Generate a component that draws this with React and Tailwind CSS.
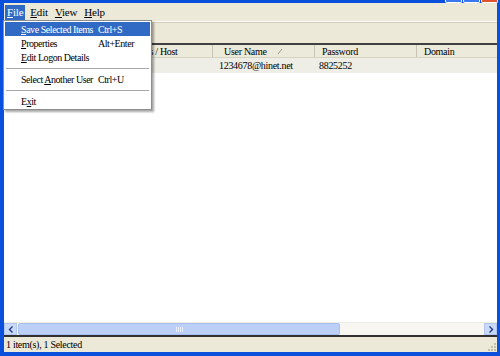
import React from "react";

const menuItems = [
  { label: "Save Selected Items", at: 0, shortcut: "Ctrl+S", active: true },
  { label: "Properties", at: 0, shortcut: "Alt+Enter" },
  { label: "Edit Logon Details", at: 0, shortcut: "" },
  { sep: true },
  { label: "Select Another User", at: 7, shortcut: "Ctrl+U" },
  { sep: true },
  { label: "Exit", at: 1, shortcut: "" },
];

function Underlined({ text, at }) {
  return (
    <span>
      {text.slice(0, at)}
      <span className="underline">{text[at]}</span>
      {text.slice(at + 1)}
    </span>
  );
}

export default function App() {
  return (
    <div
      className="relative w-[500px] h-[356px] bg-[#0a50dc] pt-[3px] pl-[4px] pr-[3px] pb-[4px] text-[10px] tracking-[-0.3px] text-black"
      style={{ fontFamily: '"Liberation Serif", "DejaVu Serif", serif' }}
    >
      {/* title bar buttons, only bottoms visible */}
      <div className="absolute top-0 right-[2px] flex gap-[1px]">
        <div className="w-[17px] h-[3px] bg-[#3a78f0] border-x border-b border-white rounded-b-[2px]" />
        <div className="w-[17px] h-[3px] bg-[#3a78f0] border-x border-b border-white rounded-b-[2px]" />
        <div className="w-[17px] h-[3px] bg-[#e0532c] border-x border-b border-white rounded-b-[2px]" />
      </div>

      <div className="flex flex-col h-full bg-[#ece9d8]">
        {/* menu bar */}
        <div className="h-[19px] flex items-center pl-[1px] text-[11px] tracking-[-0.2px] border-b border-[#fbfaf5]">
          <div className="px-[2px] h-[15px] flex items-center bg-[#316ac5] text-white">
            <Underlined text="File" at={0} />
          </div>
          <div className="px-[4px] ml-[1px]"><Underlined text="Edit" at={0} /></div>
          <div className="px-[3px]"><Underlined text="View" at={0} /></div>
          <div className="px-[4px]"><Underlined text="Help" at={0} /></div>
        </div>

        {/* toolbar area */}
        <div className="h-[21px] border-t border-[#d0cdbd]" />

        {/* list view */}
        <div className="flex-1 flex flex-col bg-white border-t-2 border-[#404040] min-h-0">
          <div className="h-[13px] flex bg-[#ebeadb] border-b border-[#d6d2c2] leading-[13px]">
            <div className="w-[209px] pl-[88px] border-r border-[#c7c5b2] whitespace-nowrap overflow-hidden">
              Internet Address / Host
            </div>
            <div className="w-[102px] pl-[11px] border-r border-[#c7c5b2] flex items-center gap-[10px]">
              <span>User Name</span>
              <svg width="7" height="7" viewBox="0 0 7 7">
                <path d="M1 6 L5 1" stroke="#9a9884" strokeWidth="1" fill="none" />
              </svg>
            </div>
            <div className="w-[102px] pl-[7px] border-r border-[#c7c5b2]">Password</div>
            <div className="flex-1 pl-[7px]">Domain</div>
          </div>
          <div className="h-[15px] flex items-center bg-[#eeede6] leading-[15px]">
            <div className="w-[209px]" />
            <div className="w-[102px] pl-[6px] whitespace-nowrap">1234678@hinet.net</div>
            <div className="w-[102px] pl-[4px]">8825252</div>
          </div>
          <div className="flex-1" />
          {/* horizontal scrollbar */}
          <div className="h-[13px] flex items-stretch bg-[#f7f6f1] border-t border-[#eeede5]">
            <div className="w-[13px] flex items-center justify-center bg-[#c9d8f7] border border-[#b3c7ee]">
              <svg width="6" height="7" viewBox="0 0 6 7">
                <path d="M4.5 0.5 L1.5 3.5 L4.5 6.5" stroke="#1c3d8c" strokeWidth="1.4" fill="none" />
              </svg>
            </div>
            <div className="w-[322px] ml-[1px] bg-[#bccff7] border border-[#a9bfee] rounded-[2px] flex items-center justify-center">
              <div className="flex gap-[1px]">
                <div className="w-[1px] h-[5px] bg-[#e8eefc]" />
                <div className="w-[1px] h-[5px] bg-[#e8eefc]" />
                <div className="w-[1px] h-[5px] bg-[#e8eefc]" />
                <div className="w-[1px] h-[5px] bg-[#e8eefc]" />
              </div>
            </div>
            <div className="flex-1" />
            <div className="w-[13px] flex items-center justify-center bg-[#c9d8f7] border border-[#b3c7ee]">
              <svg width="6" height="7" viewBox="0 0 6 7">
                <path d="M1.5 0.5 L4.5 3.5 L1.5 6.5" stroke="#1c3d8c" strokeWidth="1.4" fill="none" />
              </svg>
            </div>
          </div>
        </div>

        {/* status bar */}
        <div className="relative h-[17px] flex items-center pl-[2px] border-t-2 border-[#303030] bg-[#ece9d8]">
          1 item(s), 1 Selected
          <div className="absolute right-[1px] bottom-[1px] grid grid-cols-3 gap-[1px]">
            <div />
            <div />
            <div className="w-[2px] h-[2px] bg-[#c3bfa8]" />
            <div />
            <div className="w-[2px] h-[2px] bg-[#c3bfa8]" />
            <div className="w-[2px] h-[2px] bg-[#c3bfa8]" />
            <div className="w-[2px] h-[2px] bg-[#c3bfa8]" />
            <div className="w-[2px] h-[2px] bg-[#c3bfa8]" />
            <div className="w-[2px] h-[2px] bg-[#c3bfa8]" />
          </div>
        </div>
      </div>

      {/* File menu dropdown */}
      <div className="absolute left-[3px] top-[20px] w-[149px] bg-white border border-[#8d8d8d] shadow-[2px_2px_2px_rgba(0,0,0,0.35)] p-[1px] tracking-[-0.45px]">
        {menuItems.map((it, i) =>
          it.sep ? (
            <div key={i} className="h-[8px] flex items-center px-[1px]">
              <div className="w-full h-[1px] bg-[#a7a6aa]" />
            </div>
          ) : (
            <div
              key={i}
              className={
                "h-[14px] flex items-center pl-[16px] whitespace-nowrap " +
                (it.active ? "bg-[#316ac5] text-white" : "")
              }
            >
              <span className="w-[77px]">
                <Underlined text={it.label} at={it.at} />
              </span>
              <span>{it.shortcut}</span>
            </div>
          )
        )}
      </div>
    </div>
  );
}
